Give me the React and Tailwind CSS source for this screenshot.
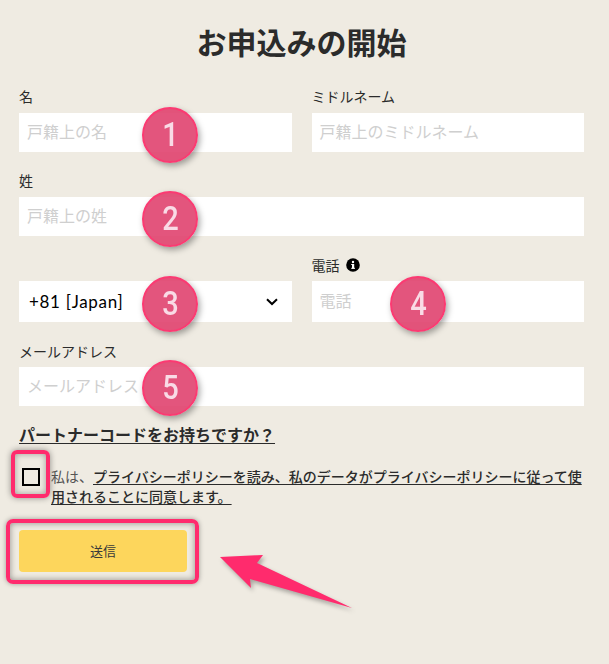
const font = "[font-family:'Noto_Sans_CJK_JP','Noto_Sans',sans-serif]";

function Field({ label, placeholder, gap = "mb-[8px]" }) {
  return (
    <div className="flex flex-col">
      <label className={"h-[18px] flex items-center text-[14px] leading-[18px] text-[#2b2b2b] whitespace-nowrap " + gap}>
        {label}
      </label>
      <div className="h-[39px] bg-white pl-[8px] pb-[3px] flex items-center text-[16px] text-[#cfcfcf] whitespace-nowrap">
        {placeholder}
      </div>
    </div>
  );
}

function Badge({ n, className }) {
  return (
    <div
      className={
        "absolute w-[56px] h-[56px] rounded-full bg-[#e0436f]/90 border-[2px] border-[#fb3a72] shadow-[2px_3px_6px_rgba(0,0,0,0.35)] flex items-center justify-center pb-[2px] text-[33px] leading-none font-medium text-[#f9dbe6] [font-family:'Roboto',sans-serif] " +
        className
      }
    >
      <span className="inline-block scale-x-[0.88]">{n}</span>
    </div>
  );
}

export default function App() {
  return (
    <div className={"relative w-[609px] h-[664px] overflow-hidden bg-[#efebe2] pl-[19px] pr-[25px] pt-[21px] " + font}>
      <h1 className="h-[40px] text-center text-[30px] leading-[40px] font-bold text-[#2b2b2b]">お申込みの開始</h1>

      <div className="mt-[26px] grid grid-cols-2 gap-x-[20px]">
        <Field label="名" placeholder="戸籍上の名" />
        <Field label="ミドルネーム" placeholder="戸籍上のミドルネーム" />
      </div>

      <div className="mt-[19px]">
        <Field label="姓" placeholder="戸籍上の姓" />
      </div>

      <div className="mt-[20px] grid grid-cols-2 gap-x-[20px]">
        <div className="flex flex-col justify-end">
          <div className="h-[41px] bg-white pl-[10px] pr-[14px] flex items-center justify-between text-[17px] tracking-[0.7px] text-black [font-family:'Lato','Noto_Sans',sans-serif]">
            <span>+81 [Japan]</span>
            <svg width="12" height="8" viewBox="0 0 12 8" fill="none" stroke="#000" strokeWidth="2" aria-hidden="true">
              <path d="M1 1.2 L6 6 L11 1.2" />
            </svg>
          </div>
        </div>
        <div className="flex flex-col">
          <label className="h-[18px] mb-[7px] flex items-center gap-[6px] text-[14px] leading-[18px] text-[#2b2b2b]">
            電話
            <svg width="14" height="14" viewBox="0 0 14 14" aria-hidden="true">
              <circle cx="7" cy="7" r="6.8" fill="#000" />
              <rect x="6" y="6" width="2.2" height="4.6" fill="#fff" />
              <rect x="5.2" y="6" width="2" height="1" fill="#fff" />
              <rect x="5.2" y="9.8" width="3.8" height="1" fill="#fff" />
              <circle cx="7" cy="4" r="1.2" fill="#fff" />
            </svg>
          </label>
          <div className="h-[41px] bg-white pl-[8px] pb-[3px] flex items-center text-[16px] text-[#cfcfcf]">電話</div>
        </div>
      </div>

      <div className="mt-[20px]">
        <Field label="メールアドレス" placeholder="メールアドレス" gap="mb-[7px]" />
      </div>

      <p className="mt-[18px] text-[16px] leading-[20px] font-bold text-[#2b2b2b] underline underline-offset-2">
        パートナーコードをお持ちですか？
      </p>

      <div className="mt-[14px] flex items-start">
        <div className="w-[32px] shrink-0 pl-[3px] pt-[9px]">
          <div className="w-[18px] h-[18px] mt-[1px] border-[2.5px] border-black" />
        </div>
        <p className="text-[14px] leading-[20px] pt-[8px] text-[#2b2b2b] w-[534px]">
          <span className="text-[#555]">私は、</span>
          <span className="font-medium underline underline-offset-2">プライバシーポリシーを読み、私のデータがプライバシーポリシーに従って使用されることに同意します。</span>
        </p>
      </div>

      <button className="mt-[24px] w-[168px] h-[42px] rounded-[4px] bg-[#fdd65c] text-[13px] text-[#3a3a3a] flex items-center justify-center">
        送信
      </button>

      <Badge n="1" className="left-[142px] top-[107px]" />
      <Badge n="2" className="left-[142px] top-[191px]" />
      <Badge n="3" className="left-[142px] top-[276px]" />
      <Badge n="4" className="left-[390px] top-[276px]" />
      <Badge n="5" className="left-[142px] top-[360px]" />

      <div className="absolute left-[11px] top-[450px] w-[39px] h-[48px] rounded-[6px] border-[4px] border-[#ff2b6d] shadow-[0_0_6px_rgba(0,0,0,0.4),inset_0_0_6px_rgba(0,0,0,0.35)]" />
      <div className="absolute left-[6px] top-[519px] w-[193px] h-[65px] rounded-[7px] border-[4px] border-[#ff2b6d] shadow-[0_0_5px_rgba(0,0,0,0.35),inset_0_0_6px_rgba(0,0,0,0.4)]" />

      <svg className="absolute left-[210px] top-[545px] drop-shadow-[2px_3px_2px_rgba(0,0,0,0.3)]" width="150" height="70" viewBox="0 0 150 70" aria-hidden="true">
        <path d="M10 12 L53 10 L47 18 L142 63 L40 34 L41 43 Z" fill="#ff2b6d" />
      </svg>
    </div>
  );
}
